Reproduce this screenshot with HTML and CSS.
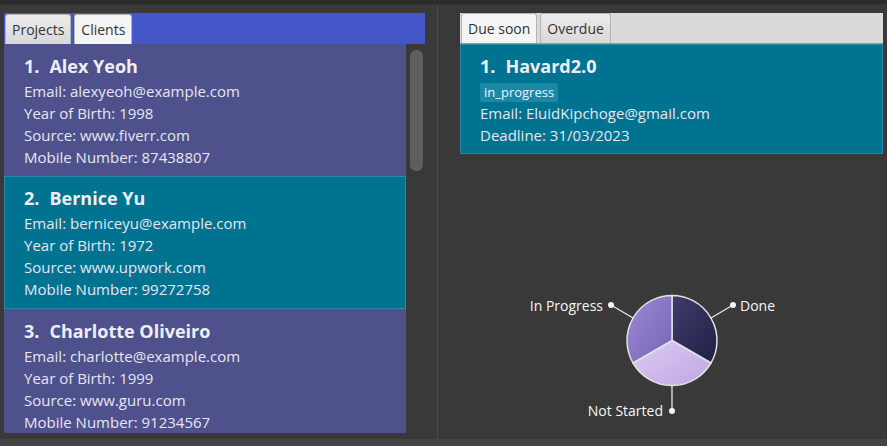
FILE: index.html
```html
<!DOCTYPE html>
<html>
<head>
<meta charset="utf-8">
<link rel="stylesheet" href="styles.css">
</head>
<body>
<div class="topbar"></div>
<div class="main">
  <div class="split left-split">
    <div class="pane">
      <div class="tabbar blue">
        <div class="tab">Projects</div>
        <div class="tab active">Clients</div>
      </div>
      <div class="list-wrap">
        <div class="list">
          <div class="card purple">
            <div class="name"><span class="idx">1.</span>Alex Yeoh</div>
            <div class="line">Email: alexyeoh@example.com</div>
            <div class="line">Year of Birth: 1998</div>
            <div class="line">Source: www.fiverr.com</div>
            <div class="line">Mobile Number: 87438807</div>
          </div>
          <div class="card teal">
            <div class="name"><span class="idx">2.</span>Bernice Yu</div>
            <div class="line">Email: berniceyu@example.com</div>
            <div class="line">Year of Birth: 1972</div>
            <div class="line">Source: www.upwork.com</div>
            <div class="line">Mobile Number: 99272758</div>
          </div>
          <div class="card purple">
            <div class="name"><span class="idx">3.</span>Charlotte Oliveiro</div>
            <div class="line">Email: charlotte@example.com</div>
            <div class="line">Year of Birth: 1999</div>
            <div class="line">Source: www.guru.com</div>
            <div class="line">Mobile Number: 91234567</div>
          </div>
        </div>
        <div class="scrolltrack"><div class="thumb"></div></div>
      </div>
    </div>
  </div>
  <div class="divider"></div>
  <div class="split right-split">
    <div class="pane right-pane">
      <div class="tabbar gray">
        <div class="tab active">Due soon</div>
        <div class="tab">Overdue</div>
      </div>
      <div class="card teal project">
        <div class="name"><span class="idx">1.</span>Havard2.0</div>
        <div class="chip-row"><span class="chip">in_progress</span></div>
        <div class="line">Email: EluidKipchoge@gmail.com</div>
        <div class="line">Deadline: 31/03/2023</div>
      </div>
      <div class="chart">
        <svg width="423" height="286" viewBox="0 0 423 286">
          <defs>
            <linearGradient id="gDone" x1="0" y1="0" x2="1" y2="1">
              <stop offset="0" stop-color="#403e6a"/>
              <stop offset="1" stop-color="#201f44"/>
            </linearGradient>
            <linearGradient id="gProg" x1="0" y1="0" x2="1" y2="1">
              <stop offset="0" stop-color="#9c8ad6"/>
              <stop offset="1" stop-color="#7664b6"/>
            </linearGradient>
            <linearGradient id="gNot" x1="0" y1="0" x2="1" y2="1">
              <stop offset="0" stop-color="#ddccf6"/>
              <stop offset="1" stop-color="#bea6e0"/>
            </linearGradient>
          </defs>
          <g stroke="#e2e2e2" stroke-width="1.5">
            <path d="M212,186.5 L212,141.5 A45,45 0 0 1 250.97,209 Z" fill="url(#gDone)"/>
            <path d="M212,186.5 L250.97,209 A45,45 0 0 1 173.03,209 Z" fill="url(#gNot)"/>
            <path d="M212,186.5 L173.03,209 A45,45 0 0 1 212,141.5 Z" fill="url(#gProg)"/>
          </g>
          <g stroke="#e8e8e8" stroke-width="1.3">
            <line x1="250.97" y1="164" x2="273" y2="151"/>
            <line x1="173.03" y1="164" x2="151" y2="151"/>
            <line x1="212" y1="231.5" x2="212" y2="257"/>
          </g>
          <g fill="#f4f4f4">
            <circle cx="273" cy="151" r="3"/>
            <circle cx="151" cy="151" r="3"/>
            <circle cx="212" cy="257" r="3"/>
          </g>
          <g class="lbl">
            <text x="280" y="157">Done</text>
            <text x="143" y="157" text-anchor="end">In Progress</text>
            <text x="203" y="262" text-anchor="end">Not Started</text>
          </g>
        </svg>
      </div>
    </div>
  </div>
</div>
<div class="bottombar"></div>
</body>
</html>
```

FILE: styles.css
```css
* { box-sizing: border-box; }
html, body { margin: 0; padding: 0; }
body {
  width: 887px;
  height: 446px;
  overflow: hidden;
  background: #393939;
  font-family: "Open Sans", "Noto Sans", sans-serif;
  display: flex;
  flex-direction: column;
}
.topbar { height: 5px; background: #2c2c2c; border-bottom: 1px solid #333; }
.main { flex: 1; display: flex; min-height: 0; }
.bottombar { height: 7px; background: #444; }

.split { display: flex; flex-direction: column; }
.left-split { width: 437px; padding: 8px 12px 6px 4px; }
.divider { width: 1px; background: #4c4c4c; }
.right-split { flex: 1; padding: 8px 4px 0 22px; }

.pane { display: flex; flex-direction: column; flex: 1; min-height: 0; }

.tabbar { height: 31px; display: flex; align-items: flex-end; gap: 3px; padding-left: 1px; }
.tabbar.blue { background: #4357c9; }
.tabbar.gray { background: #dadada; border-bottom: 1px solid #8d9ba6; padding-left: 1px; }
.tab {
  height: 30px;
  padding: 0 6px;
  display: flex;
  align-items: center;
  font-size: 14px;
  color: #333;
  background: linear-gradient(#ececec, #d8d8d8);
  border: 1px solid #b4b4b4;
  border-bottom: none;
  border-radius: 3px 3px 0 0;
}
.tab.active { background: #f4f4f4; }

.list-wrap { flex: 1; display: flex; min-height: 0; }
.list { width: 402px; overflow: hidden; }
.scrolltrack { flex: 1; padding: 6px 2px 0 4px; }
.thumb { width: 13px; height: 121px; background: #5e5e5e; border-radius: 6px; }

.card { color: #e6e6f0; padding: 9px 10px 8px 20px; }
.card.purple { background: #4f518c; }
.card.teal { background: #007390; border: 1px solid #2b8aa3; padding: 8px 10px 7px 19px; }
.list .card { height: 133px; flex-shrink: 0; }
.list .card.purple:first-child { height: 132px; }

.name { font-size: 18px; font-weight: 700; line-height: 26px; margin-bottom: 1px; color: #eeeef4; }
.idx { display: inline-block; margin-right: 10px; }
.line { font-size: 15px; line-height: 22px; }

.project { height: 110px; }
.chip-row { margin-top: 4px; height: 19px; display: flex; }
.chip {
  display: inline-block;
  background: #1a89a7;
  color: #eaf4f8;
  font-size: 13px;
  line-height: 19px;
  padding: 0 4px;
  border-radius: 2px;
}

.chart { flex: 1; }
.chart svg { display: block; }
.lbl text { font-family: "Open Sans", "Noto Sans", sans-serif; font-size: 14px; fill: #f6f6f6; }
```
